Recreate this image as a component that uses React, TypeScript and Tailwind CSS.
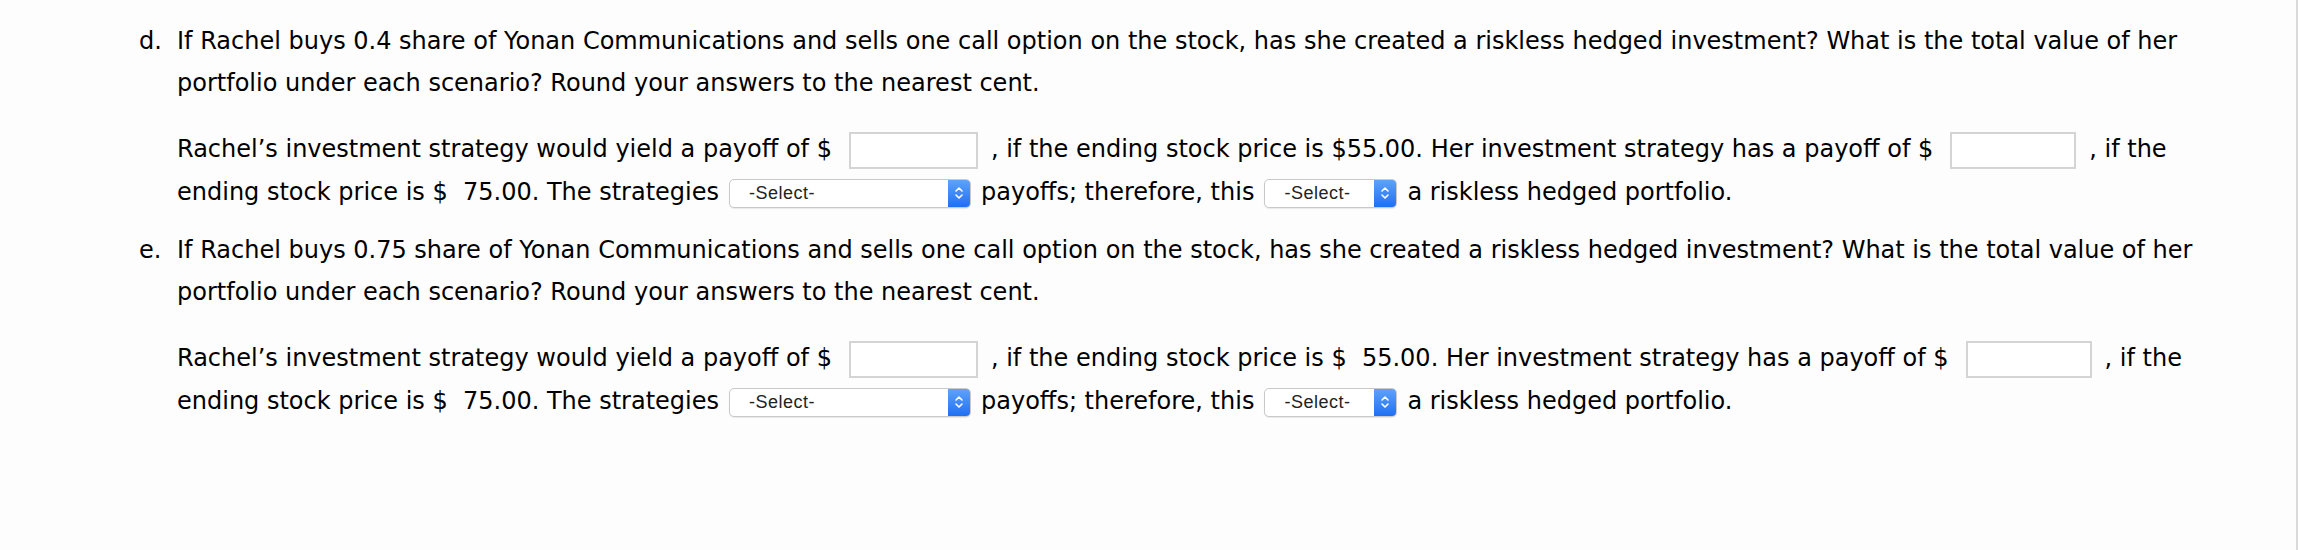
import { ReactNode } from "react";

const Blank = ({ w }: { w: string }) => (
  <span
    className={`inline-block align-middle h-[37px] ml-[17px] mr-[13px] border-2 border-[#d4d4d4] bg-white ${w}`}
  />
);

const Picker = ({ w }: { w: string }) => (
  <span
    className={`inline-flex align-middle items-stretch h-[29px] mx-[10px] rounded-[5px] border border-[#c9c9c9] bg-white shadow-[0_1px_1px_rgba(0,0,0,0.08)] ${w}`}
  >
    <span className="flex-1 flex items-center pl-[19px] text-[18px] tracking-[0.5px] leading-none text-[#222] font-['Liberation_Sans',Arial,sans-serif]">
      -Select-
    </span>
    <span className="w-[22px] flex items-center justify-center rounded-r-[4px] bg-gradient-to-b from-[#5ea2fb] to-[#1f6ff2]">
      <svg width="10" height="18" viewBox="0 0 10 18" fill="none">
        <path d="M2 7 L5 4 L8 7" stroke="white" strokeWidth="1.6" strokeLinecap="round" strokeLinejoin="round" />
        <path d="M2 11 L5 14 L8 11" stroke="white" strokeWidth="1.6" strokeLinecap="round" strokeLinejoin="round" />
      </svg>
    </span>
  </span>
);

const Item = ({ label, question, children }: { label: string; question: string; children: ReactNode }) => (
  <div className="flex">
    <div className="w-[38px] shrink-0 leading-[42px]">{label}</div>
    <div className="flex-1">
      <p className="leading-[42px]">{question}</p>
      <p className="mt-[24px] leading-[43px]">{children}</p>
    </div>
  </div>
);

export default function App() {
  return (
    <div className="min-h-[550px] bg-[#fdfdfd] border-r-2 border-[#dadada] text-black text-[24px] font-['DejaVu_Sans',Verdana,sans-serif]">
      <div className="pl-[139px] pr-[80px] pt-[20px] flex flex-col gap-[15px]">
        <Item
          label="d."
          question="If Rachel buys 0.4 share of Yonan Communications and sells one call option on the stock, has she created a riskless hedged investment? What is the total value of her portfolio under each scenario? Round your answers to the nearest cent."
        >
          Rachel’s investment strategy would yield a payoff of $<Blank w="w-[129px]" />, if the ending
          stock price is $55.00. Her investment strategy has a payoff of $<Blank w="w-[126px]" />, if the
          ending stock price is $&nbsp; 75.00. The strategies<Picker w="w-[242px]" />payoffs; therefore,
          this<Picker w="w-[133px]" />a riskless hedged portfolio.
        </Item>
        <Item
          label="e."
          question="If Rachel buys 0.75 share of Yonan Communications and sells one call option on the stock, has she created a riskless hedged investment? What is the total value of her portfolio under each scenario? Round your answers to the nearest cent."
        >
          Rachel’s investment strategy would yield a payoff of $<Blank w="w-[129px]" />, if the ending
          stock price is $&nbsp; 55.00. Her investment strategy has a payoff of $<Blank w="w-[126px]" />,
          if the ending stock price is $&nbsp; 75.00. The strategies<Picker w="w-[242px]" />payoffs;
          therefore, this<Picker w="w-[133px]" />a riskless hedged portfolio.
        </Item>
      </div>
    </div>
  );
}
